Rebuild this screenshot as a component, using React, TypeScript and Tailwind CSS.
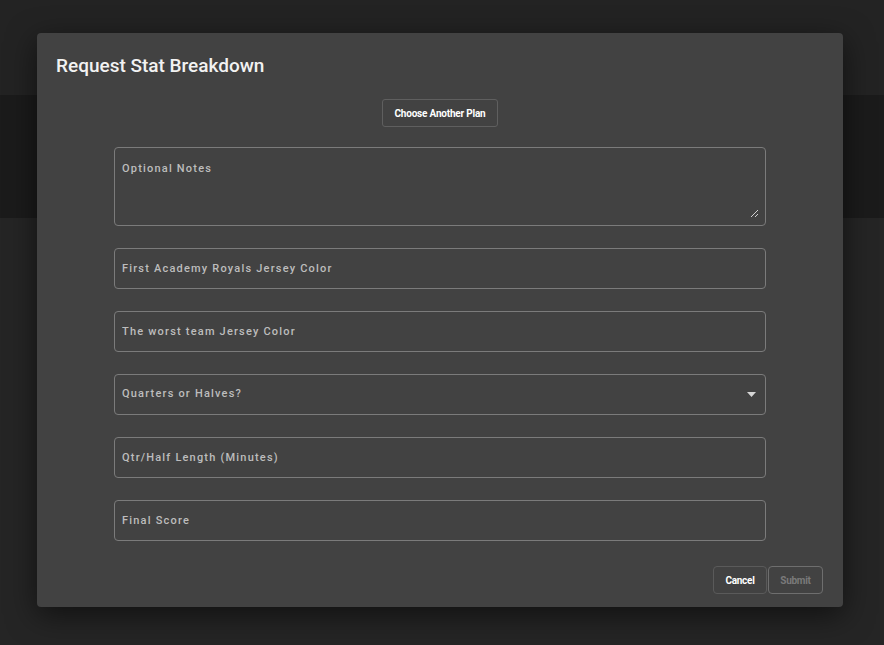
import { ChangeEvent, useState } from 'react'

const fieldClass =
  'w-full h-[41px] px-[7px] rounded-[4px] border border-[#7b7b7b] bg-transparent text-[11px] font-medium tracking-[1.2px] text-[#bdbdbd] placeholder:text-[#bdbdbd] outline-none'

function Field({ label }: { label: string }) {
  return <input className={fieldClass} placeholder={label} />
}

export default function App() {
  const [period, setPeriod] = useState('')

  return (
    <div className="relative w-[884px] h-[645px] overflow-hidden bg-[#232323]" style={{ fontFamily: 'Roboto, "Liberation Sans", sans-serif' }}>
      {/* page behind the dialog */}
      <div className="flex flex-col h-full">
        <div className="h-[95px] bg-[#232323]" />
        <div className="h-[123px] bg-[#1b1b1b]" />
        <div className="flex-1 bg-[#252525]" />
      </div>

      {/* Dialog */}
      <div className="absolute left-[37px] top-[33px] w-[806px] h-[574px] rounded-[4px] bg-[#424242] shadow-[0_8px_30px_rgba(0,0,0,0.55)] flex flex-col">
        <h2 className="px-[19px] pt-[20px] h-[54px] text-[19px] leading-[26px] font-medium text-[#f2f2f2]">
          Request Stat Breakdown
        </h2>

        <div className="flex justify-center mt-[12px]">
          <button className="h-[28px] px-[11px] rounded-[3px] border border-[#5f5f5f] text-[10px] font-bold text-white tracking-[-0.2px]">
            Choose Another Plan
          </button>
        </div>

        <div className="mx-auto w-[652px] mt-[20px] flex flex-col gap-[22px]">
          <div className="relative">
            <textarea
              className="block w-full h-[79px] px-[7px] pt-[13px] rounded-[4px] border border-[#7b7b7b] bg-transparent text-[11px] font-medium tracking-[1.2px] text-[#bdbdbd] placeholder:text-[#bdbdbd] outline-none resize-none"
              placeholder="Optional Notes"
            />
            <svg className="absolute right-[7px] bottom-[8px]" width="9" height="9" viewBox="0 0 9 9">
              <path d="M1 8 L8 1 M5 8 L8 5" stroke="#d0d0d0" strokeWidth="1" />
            </svg>
          </div>
          <Field label="First Academy Royals Jersey Color" />
          <Field label="The worst team Jersey Color" />
          <div className="relative">
            <select
              value={period}
              onChange={(e: ChangeEvent<HTMLSelectElement>) => setPeriod(e.target.value)}
              className={fieldClass + ' appearance-none'}
            >
              <option value="">Quarters or Halves?</option>
              <option value="quarters">Quarters</option>
              <option value="halves">Halves</option>
            </select>
            <svg className="absolute right-[10px] top-[18px] pointer-events-none" width="9" height="5" viewBox="0 0 9 5">
              <path d="M0 0 H9 L4.5 5 Z" fill="#d6d6d6" />
            </svg>
          </div>
          <Field label="Qtr/Half Length (Minutes)" />
          <Field label="Final Score" />
        </div>

        <div className="flex justify-end gap-[1px] px-[20px] mt-auto mb-[13px]">
          <button className="h-[28px] w-[54px] rounded-[4px] border border-[#5a5a5a] text-[10px] font-bold text-white tracking-[-0.3px]">
            Cancel
          </button>
          <button disabled className="h-[28px] w-[55px] rounded-[4px] border border-[#6e6e6e] text-[10px] font-bold text-[#7a7a7a] tracking-[-0.3px]">
            Submit
          </button>
        </div>
      </div>
    </div>
  )
}
